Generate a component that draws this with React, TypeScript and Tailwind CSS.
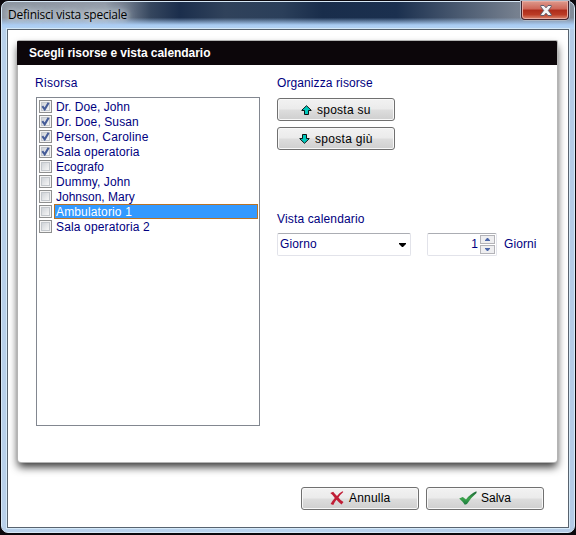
import type { ReactNode } from "react";

const resources = [
  { name: "Dr. Doe, John", checked: true, tracking: "tracking-[0.05px]" },
  { name: "Dr. Doe, Susan", checked: true, tracking: "tracking-[0.1px]" },
  { name: "Person, Caroline", checked: true, tracking: "tracking-[0.2px]" },
  { name: "Sala operatoria", checked: true, tracking: "tracking-[0.15px]" },
  { name: "Ecografo", checked: false, tracking: "tracking-[0px]" },
  { name: "Dummy, John", checked: false, tracking: "tracking-[0.1px]" },
  { name: "Johnson, Mary", checked: false, tracking: "tracking-[0px]" },
  { name: "Ambulatorio 1", checked: false, tracking: "tracking-[0.15px]", selected: true },
  { name: "Sala operatoria 2", checked: false, tracking: "tracking-[0.15px]" },
];

function Checkbox({ checked }: { checked: boolean }) {
  return (
    <span className="mt-px block size-[13px] shrink-0 border border-[#8e8f8f] bg-[#f4f4f4] p-px">
      <span className="block size-[9px] border border-[#c3c7cc] bg-linear-to-br from-[#cfd3d8] to-[#f6f6f6]">
        {checked && (
          <svg viewBox="0 0 9 9" className="-m-px block h-[9px] w-[9px] max-w-none" fill="none">
            <path d="M1.3 4.2 L3.7 7.4 L7.6 .8" stroke="#455c98" strokeWidth="2.1" />
          </svg>
        )}
      </span>
    </span>
  );
}

function Button({ children, className = "" }: { children: ReactNode; className?: string }) {
  return (
    <button
      className={`flex h-[23px] w-[118px] items-center rounded-[3px] border border-[#707070] bg-[linear-gradient(#f2f2f2_0%,#ebebeb_48%,#dddddd_52%,#cfcfcf_100%)] text-[12px] leading-none text-black shadow-[inset_0_0_0_1px_#f8f8f8] ${className}`}
    >
      {children}
    </button>
  );
}

function Arrow({ down = false }: { down?: boolean }) {
  return (
    <svg viewBox="0 0 11 10" className={`h-[10px] w-[11px] shrink-0 ${down ? "rotate-180" : ""}`}>
      <path d="M5.5 .7 L10.2 5.2 V5.5 H7.5 V9.5 H3.5 V5.5 H.8 V5.2 Z" fill="#00c8bc" stroke="#000" strokeWidth=".9" />
    </svg>
  );
}

function SpinButton({ down = false }: { down?: boolean }) {
  return (
    <span className="flex h-[9px] w-[15px] items-center justify-center border border-[#b3b3b8] bg-[#eeeef0]">
      <svg viewBox="0 0 5 3" className={`h-[3px] w-[5px] ${down ? "rotate-180" : ""}`}>
        <path d="M0 3 V2.3 L2 0 H3 L5 2.3 V3Z" fill="#4c66a8" />
      </svg>
    </span>
  );
}

export default function App() {
  return (
    <div className="h-[535px] w-[576px] overflow-hidden bg-[#0b080d] p-px pb-[2px] font-['Liberation_Sans',Arial,sans-serif] text-[12px] text-[#000080]">
      <div className="flex h-[532px] w-[574px] flex-col rounded-[7px] border border-[#d7e8f6] bg-[linear-gradient(90deg,#b8d0ea,#bad4ef_50%,#b4cbe6)]">
        <header className="flex h-[27px] shrink-0 items-start justify-between rounded-t-[6px] bg-[linear-gradient(180deg,transparent_58%,#a9ccf3_85%,#b5d3f1),linear-gradient(90deg,#8c949f_0%,#929ba8_18%,#6b7789_22%,#35465e_26%,#1b2e4c_31%,#30425b_39%,#2b3f5a_49%,#192d4b_56%,#1b304f_69%,#536277_82%,#76808f_90%,#828c99_100%)]">
          <h1 className="ml-[6px] mt-[5px] font-['Open_Sans','Noto_Sans',sans-serif] text-[12px] leading-[16px] tracking-[-0.22px] text-black [text-shadow:0_0_5px_#d4dce5,0_0_9px_#d4dce5,0_0_12px_#d4dce5]">
            Definisci vista speciale
          </h1>
          <button
            aria-label="Chiudi"
            className="-mt-px mr-[5px] flex h-[19px] w-[48px] items-center justify-center rounded-b-[4px] border border-t-0 border-[#42232d] bg-[linear-gradient(#dd9a8d_0%,#ce6556_45%,#ad2c1b_50%,#bb3b25_75%,#db8970_100%)] pl-[2px] shadow-[inset_0_0_0_1px_#e7aaa0,0_0_0_1px_#adb7c4]"
          >
            <svg viewBox="0 0 12 11" className="h-[11px] w-[12px]">
              <path
                d="M.8 .5 H4 L6 2.8 L8 .5 H11.2 V1.8 L8.3 5.5 L11.2 9.2 V10.5 H8 L6 8.2 L4 10.5 H.8 V9.2 L3.7 5.5 L.8 1.8Z"
                fill="#f5f5f5"
                stroke="#535666"
                strokeWidth=".9"
              />
            </svg>
          </button>
        </header>

        <div className="ml-[5px] flex h-[499px] w-[562px] flex-col border border-[#58636f] bg-white pl-[10px] pt-[11px] shadow-[0_0_0_1px_#d5e9f8]">
          <section className="h-[421px] w-[539px] shrink-0 rounded-t-[1px] rounded-b-[3px] bg-white shadow-[0_0_0_1px_#b4b4b4,0_5px_8px_0_#353535]">
            <h2 className="-ml-px flex h-6 w-[540px] items-center rounded-t-[1px] bg-[#0c060a] pl-3 font-bold tracking-[-0.04px] text-white">
              Scegli risorse e vista calendario
            </h2>
            <div className="flex pl-[17px] pt-[10px]">
              <div className="w-[242px]">
                <label className="block h-[22px] leading-4 tracking-[0.3px]">Risorsa</label>
                <ul className="ml-px h-[329px] w-[224px] border border-[#828790] bg-white pl-[2px] pt-px">
                  {resources.map(({ name, checked, selected, tracking }) => (
                    <li key={name} className="flex h-[15px] gap-[2px]">
                      <Checkbox checked={checked} />
                      <span
                        className={`block h-[15px] whitespace-nowrap border pl-px leading-[14px] ${tracking} ${
                          selected ? "w-[204px] border-[#b97324] bg-[#3399ff] text-white" : "border-transparent"
                        }`}
                      >
                        {name}
                      </span>
                    </li>
                  ))}
                </ul>
              </div>

              <div>
                <label className="block h-[23px] leading-4 tracking-[0.1px]">Organizza risorse</label>
                <div className="flex flex-col gap-[6px]">
                  <Button className="gap-[5px] pl-[23px] tracking-[0.25px]">
                    <Arrow />
                    sposta su
                  </Button>
                  <Button className="gap-[5px] pl-[21px] tracking-[0.3px]">
                    <Arrow down />
                    sposta giù
                  </Button>
                </div>
                <label className="mt-[61px] block h-[22px] leading-4 tracking-[0.15px]">Vista calendario</label>
                <div className="flex items-center">
                  <div className="flex h-[23px] w-[134px] items-center justify-between rounded-[2px] border border-[#e2e3ea] border-t-[#abadb3] pl-[2px] pr-[4px]">
                    <span className="-mt-px tracking-[0.15px]">Giorno</span>
                    <svg viewBox="0 0 7 4" className="h-[4px] w-[7px]">
                      <path d="M0 0 H7 V1 L4 4 H3 L0 1Z" fill="#000" />
                    </svg>
                  </div>
                  <div className="ml-4 flex h-[23px] w-[70px] items-center justify-end gap-[2px] rounded-[2px] border border-[#e2e3ea] border-t-[#abadb3] pr-px">
                    <span className="-mt-px">1</span>
                    <span className="flex flex-col gap-px">
                      <SpinButton />
                      <SpinButton down />
                    </span>
                  </div>
                  <span className="-mt-px ml-[7px] tracking-[0.1px]">Giorni</span>
                </div>
              </div>
            </div>
          </section>

          <footer className="ml-[283px] mt-[25px] flex gap-[7px]">
            <Button className="gap-[5px] pb-px pl-[28px] tracking-[0.2px]">
              <svg viewBox="0 0 14 14" className="size-[14px] shrink-0">
                <path
                  d="M.3 2 L3.2 .8 Q5 3.2 7 5 Q9.3 1.8 12.5 .2 L13.3 1 Q10.3 3.5 8.5 6.5 Q10.5 9.5 13.5 11 L11.5 13.6 Q8.5 11.2 6.5 8.8 Q4.5 11.2 3.3 14 L.6 13 Q2.6 9.3 4.8 6.9 Q3 4 .3 2Z"
                  fill="#c01e36"
                />
              </svg>
              Annulla
            </Button>
            <Button className="gap-[4px] pb-px pl-[32px]">
              <svg viewBox="0 0 18 14" className="h-[14px] w-[18px] shrink-0">
                <defs>
                  <linearGradient id="tick" x1="0" y1="0" x2="0" y2="1">
                    <stop stopColor="#176333" />
                    <stop offset=".55" stopColor="#3ca34c" />
                    <stop offset="1" stopColor="#16783b" />
                  </linearGradient>
                </defs>
                <path d="M.2 7.6 L3.8 6 L7 8.5 Q11 3 17.5 .3 V2 Q12 6.5 8 13 L5.8 13.8 Q3.6 10.5 .2 7.6Z" fill="url(#tick)" />
              </svg>
              Salva
            </Button>
          </footer>
        </div>
      </div>
    </div>
  );
}
